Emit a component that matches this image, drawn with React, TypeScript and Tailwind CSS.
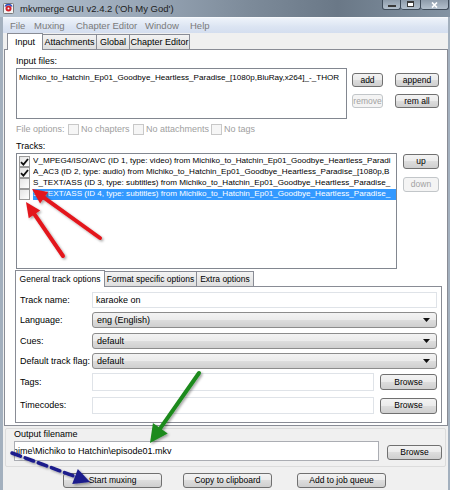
import React from 'react';

const BTN = 'bg-[linear-gradient(#f3f3f3_0%,#ebebeb_49%,#dddddd_50%,#cfcfcf_100%)]';

type Kids = { children?: React.ReactNode; className?: string };

function Button({ children, className = '', disabled = false }: Kids & { disabled?: boolean }) {
  return (
    <div
      className={`flex items-center justify-center whitespace-nowrap rounded-[3px] border text-[8.5px] leading-none ${
        disabled ? 'border-[#c2c6c9] bg-[#f4f4f4] text-[#a2a2a2]' : `border-[#707070] ${BTN}`
      } ${className}`}
    >
      {children}
    </div>
  );
}

function Combo({ value }: { value: string }) {
  return (
    <div className={`flex h-[16px] flex-1 items-center rounded-[3px] border border-[#8c8c8c] pl-[4px] pr-[6px] leading-none ${BTN}`}>
      <span className="flex-1">{value}</span>
      <svg width="7" height="4" viewBox="0 0 7 4">
        <path d="M0 0h7L3.5 4z" fill="#111" />
      </svg>
    </div>
  );
}

function CheckBox({ checked = false, disabled = false }: { checked?: boolean; disabled?: boolean }) {
  return (
    <div
      className={`flex h-[11px] w-[11px] shrink-0 items-center justify-center border ${
        disabled ? 'border-[#c8c8c8] bg-[#f6f6f6]' : 'border-[#9a9a9a] bg-[linear-gradient(135deg,#e4e4e4,#ffffff)]'
      }`}
    >
      {checked && (
        <svg width="9" height="8" viewBox="0 0 9 8">
          <path d="M1 4.2l2.4 2.4L8 1" stroke="#111" strokeWidth="1.8" fill="none" />
        </svg>
      )}
    </div>
  );
}

function Tab({ label, active = false, className = '' }: { label: string; active?: boolean; className?: string }) {
  return active ? (
    <div className={`relative z-10 -mb-[1px] flex h-[17px] items-center justify-center whitespace-nowrap border border-b-0 border-[#898c95] bg-white leading-none ${className}`}>
      {label}
    </div>
  ) : (
    <div className={`-ml-[1px] flex h-[15px] items-center justify-center whitespace-nowrap border border-b-0 border-[#898c95] bg-[linear-gradient(#f3f3f3,#dedede)] leading-none ${className}`}>
      {label}
    </div>
  );
}

// arrow helper: line from tail to the base of the head, plus a filled head
function Arrow({ from, to, color, width, head, half, dashed = false }: {
  from: [number, number]; to: [number, number]; color: string; width: number; head: number; half: number; dashed?: boolean;
}) {
  const dx = to[0] - from[0];
  const dy = to[1] - from[1];
  const len = Math.hypot(dx, dy);
  const ux = dx / len;
  const uy = dy / len;
  const bx = to[0] - ux * head;
  const by = to[1] - uy * head;
  const pts = `${to[0]},${to[1]} ${bx - uy * half},${by + ux * half} ${bx + uy * half},${by - ux * half}`;
  return (
    <g filter="url(#shadow)">
      <line
        x1={from[0]}
        y1={from[1]}
        x2={bx + ux * 2}
        y2={by + uy * 2}
        stroke={color}
        strokeWidth={width}
        strokeLinecap="round"
        strokeDasharray={dashed ? '9 5' : undefined}
      />
      <polygon points={pts} fill={color} />
    </g>
  );
}

const tracks = [
  { text: 'V_MPEG4/ISO/AVC (ID 1, type: video) from Michiko_to_Hatchin_Ep01_Goodbye_Heartless_Paradi', checked: true },
  { text: 'A_AC3 (ID 2, type: audio) from Michiko_to_Hatchin_Ep01_Goodbye_Heartless_Paradise_[1080p,B', checked: true },
  { text: 'S_TEXT/ASS (ID 3, type: subtitles) from Michiko_to_Hatchin_Ep01_Goodbye_Heartless_Paradise_', checked: false },
  { text: 'S_TEXT/ASS (ID 4, type: subtitles) from Michiko_to_Hatchin_Ep01_Goodbye_Heartless_Paradise_', checked: false, selected: true },
];

export default function App() {
  return (
    <div className="relative h-[490px] w-[450px] overflow-hidden bg-[#a3b0be] font-['Liberation_Sans',Arial,sans-serif] text-[9px] text-black">
      {/* title bar */}
      <div className="flex h-[17px] items-center bg-[linear-gradient(90deg,#b7c4d2_0%,#9aa8b8_30%,#7d8b9a_55%,#6a7887_75%,#8393a3_100%)]">
        <svg className="ml-[3px]" width="11" height="11" viewBox="0 0 11 11">
          <rect x="0.5" y="0.5" width="10" height="10" rx="1" fill="#f4f4f4" stroke="#7a7a7a" />
          <circle cx="5.5" cy="5.5" r="3" fill="#d0202a" />
          <path d="M2 3.5a4 4 0 0 1 7 0" stroke="#2a4fc0" strokeWidth="1.5" fill="none" />
          <circle cx="5.5" cy="5.5" r="1" fill="#fff" />
        </svg>
        <span className="ml-[6px] text-[9.5px] leading-none text-[#1c1c1c]">mkvmerge GUI v2.4.2 ('Oh My God')</span>
        <div className="ml-auto flex h-full items-start pr-[1px]">
          <div className="flex h-[10px] w-[19px] items-end justify-center rounded-b-[3px] border border-t-0 border-[#3f4c5a] bg-[linear-gradient(#8e9cab,#b3c0cd)] pb-[2px]">
            <div className="h-[2px] w-[8px] border border-[#3a3a3a] bg-white" />
          </div>
          <div className="flex h-[10px] w-[20px] items-end justify-center rounded-b-[3px] border border-t-0 border-l-0 border-[#3f4c5a] bg-[linear-gradient(#8e9cab,#b3c0cd)] pb-[2px]">
            <div className="h-[6px] w-[7px] border border-[#3a3a3a] border-t-[2px] bg-white" />
          </div>
          <div className="flex h-[10px] w-[28px] items-end justify-center rounded-b-[3px] border border-t-0 border-l-0 border-[#3f4c5a] bg-[linear-gradient(#8e9cab,#b3c0cd)] pb-[1px]">
            <svg width="7" height="6" viewBox="0 0 7 6">
              <path d="M1 0.5l5 5M6 0.5l-5 5" stroke="#fff" strokeWidth="1.6" />
            </svg>
          </div>
        </div>
      </div>

      {/* client area */}
      <div className="ml-[3px] flex h-[473px] w-[445px] flex-col bg-[#f0f0f0]">
        {/* menu */}
        <div className="flex h-[16px] items-center border-t border-[#f7f9fc] bg-[linear-gradient(#eef3fa,#dbe4f2_60%,#d4deef)] pl-[7px] text-[9.5px] leading-none text-[#7a7a7a]">
          <span className="w-[24px]">File</span>
          <span className="w-[42px]">Muxing</span>
          <span className="w-[69px]">Chapter Editor</span>
          <span className="w-[45px]">Window</span>
          <span>Help</span>
        </div>

        {/* main tabs */}
        <div className="flex h-[16px] items-end pl-[4px]">
          <Tab label="Input" active className="w-[36px]" />
          <Tab label="Attachments" className="w-[55px]" />
          <Tab label="Global" className="w-[34px]" />
          <Tab label="Chapter Editor" className="w-[61px]" />
        </div>

        {/* tab page */}
        <div className="ml-[1px] flex h-[377px] w-[444px] flex-col border border-[#898c95] bg-white pl-[11px]">
          <div className="flex h-[18px] items-center pt-[4px] leading-none">Input files:</div>

          <div className="flex h-[51px]">
            <div className="h-[51px] w-[331px] overflow-hidden whitespace-nowrap border border-[#828790] px-[2px] pt-[3px] text-[8.1px] leading-[11px]">
              Michiko_to_Hatchin_Ep01_Goodbye_Heartless_Paradise_[1080p,BluRay,x264]_-_THOR
            </div>
            <div className="ml-[5px] flex flex-col">
              <div className="mt-[5px] flex">
                <Button className="h-[14px] w-[31px]">add</Button>
                <Button className="ml-[12px] h-[14px] w-[44px]">append</Button>
              </div>
              <div className="mt-[7px] flex">
                <Button disabled className="h-[14px] w-[31px]">remove</Button>
                <Button className="ml-[12px] h-[14px] w-[44px]">rem all</Button>
              </div>
            </div>
          </div>

          <div className="flex h-[20px] items-center leading-none text-[#a0a0a0]">
            <span className="w-[52px]">File options:</span>
            <CheckBox disabled />
            <span className="ml-[2px] w-[52px]">No chapters</span>
            <CheckBox disabled />
            <span className="ml-[2px] w-[65px]">No attachments</span>
            <CheckBox disabled />
            <span className="ml-[2px]">No tags</span>
          </div>

          <div className="flex h-[14px] items-center leading-none">Tracks:</div>

          <div className="flex h-[116px]">
            <div className="h-[116px] w-[381px] overflow-hidden border border-[#828790] pt-[2px] text-[8.1px]">
              {tracks.map((t) => (
                <div key={t.text} className="flex h-[11px] items-center pl-[2px] leading-none">
                  <CheckBox checked={t.checked} />
                  <span
                    className={`ml-[3px] flex h-[11px] min-w-0 flex-1 items-center overflow-hidden whitespace-nowrap ${
                      t.selected ? 'bg-[#3399ff] text-white' : ''
                    }`}
                  >
                    {t.text}
                  </span>
                </div>
              ))}
            </div>
            <div className="ml-[6px] flex flex-col">
              <Button className="mt-[1px] h-[15px] w-[36px]">up</Button>
              <Button disabled className="mt-[8px] h-[15px] w-[36px]">down</Button>
            </div>
          </div>

          {/* track option tabs */}
          <div className="-ml-[1px] mt-[3px] flex h-[14px] items-end text-[8.5px]">
            <Tab label="General track options" active className="h-[15px] w-[90px]" />
            <Tab label="Format specific options" className="h-[13px] w-[93px]" />
            <Tab label="Extra options" className="h-[13px] w-[58px]" />
          </div>
          <div className="-ml-[1px] flex h-[137px] w-[427px] flex-col border border-[#898c95] bg-white pl-[4px] pr-[4px] leading-none">
            <div className="mt-[5px] flex h-[16px] items-center">
              <span className="w-[72px]">Track name:</span>
              <div className="flex h-[16px] flex-1 items-center border border-[#dfe3e8] pl-[3px]">karaoke on</div>
            </div>
            <div className="mt-[4px] flex h-[16px] items-center">
              <span className="w-[72px]">Language:</span>
              <Combo value="eng (English)" />
            </div>
            <div className="mt-[5px] flex h-[16px] items-center">
              <span className="w-[72px]">Cues:</span>
              <Combo value="default" />
            </div>
            <div className="mt-[4px] flex h-[16px] items-center">
              <span className="w-[72px]">Default track flag:</span>
              <Combo value="default" />
            </div>
            <div className="mt-[4px] flex h-[18px] items-center">
              <span className="w-[72px]">Tags:</span>
              <div className="h-[18px] w-[282px] border border-[#dfe3e8]" />
              <Button className="ml-[6px] h-[16px] w-[57px]">Browse</Button>
            </div>
            <div className="mt-[6px] flex h-[17px] items-center">
              <span className="w-[72px]">Timecodes:</span>
              <div className="h-[17px] w-[282px] border border-[#dfe3e8]" />
              <Button className="ml-[6px] h-[16px] w-[57px]">Browse</Button>
            </div>
          </div>
        </div>

        {/* output filename */}
        <div className="ml-[2px] mt-[2px] flex h-[39px] w-[441px] flex-col rounded-[2px] border border-[#dcdcdc] pl-[8px] leading-none">
          <div className="mt-[1px] flex h-[9px] items-center">Output filename</div>
          <div className="mt-[2px] flex">
            <div className="flex h-[20px] w-[365px] items-center overflow-hidden whitespace-nowrap border border-[#abadb3] bg-white">
              <span className="-ml-[2px]">{'nime\\Michiko to Hatchin\\episode01.mkv'}</span>
            </div>
            <Button className="ml-[8px] mt-[4px] h-[15px] w-[55px]">Browse</Button>
          </div>
        </div>

        {/* action buttons */}
        <div className="mt-[6px] flex pl-[60px]">
          <Button className="h-[15px] w-[99px]">Start muxing</Button>
          <Button className="ml-[21px] h-[15px] w-[89px]">Copy to clipboard</Button>
          <Button className="ml-[25px] h-[15px] w-[89px]">Add to job queue</Button>
        </div>
      </div>

      {/* annotation arrows drawn over the screenshot */}
      <svg className="pointer-events-none absolute left-0 top-0" width="450" height="490">
        <defs>
          <filter id="shadow" x="-20%" y="-20%" width="140%" height="140%">
            <feDropShadow dx="1.5" dy="1.5" stdDeviation="1" floodColor="#000" floodOpacity="0.35" />
          </filter>
        </defs>
        <Arrow from={[100, 238]} to={[32, 189]} color="#e3161c" width={4} head={15} half={7} />
        <Arrow from={[63, 256]} to={[26, 202]} color="#e3161c" width={4} head={15} half={7} />
        <Arrow from={[199, 373]} to={[150, 443]} color="#1d8a1d" width={4} head={18} half={9} />
        <Arrow from={[12, 453]} to={[90, 482]} color="#1b1b8c" width={3.5} head={16} half={8} dashed />
      </svg>
    </div>
  );
}
